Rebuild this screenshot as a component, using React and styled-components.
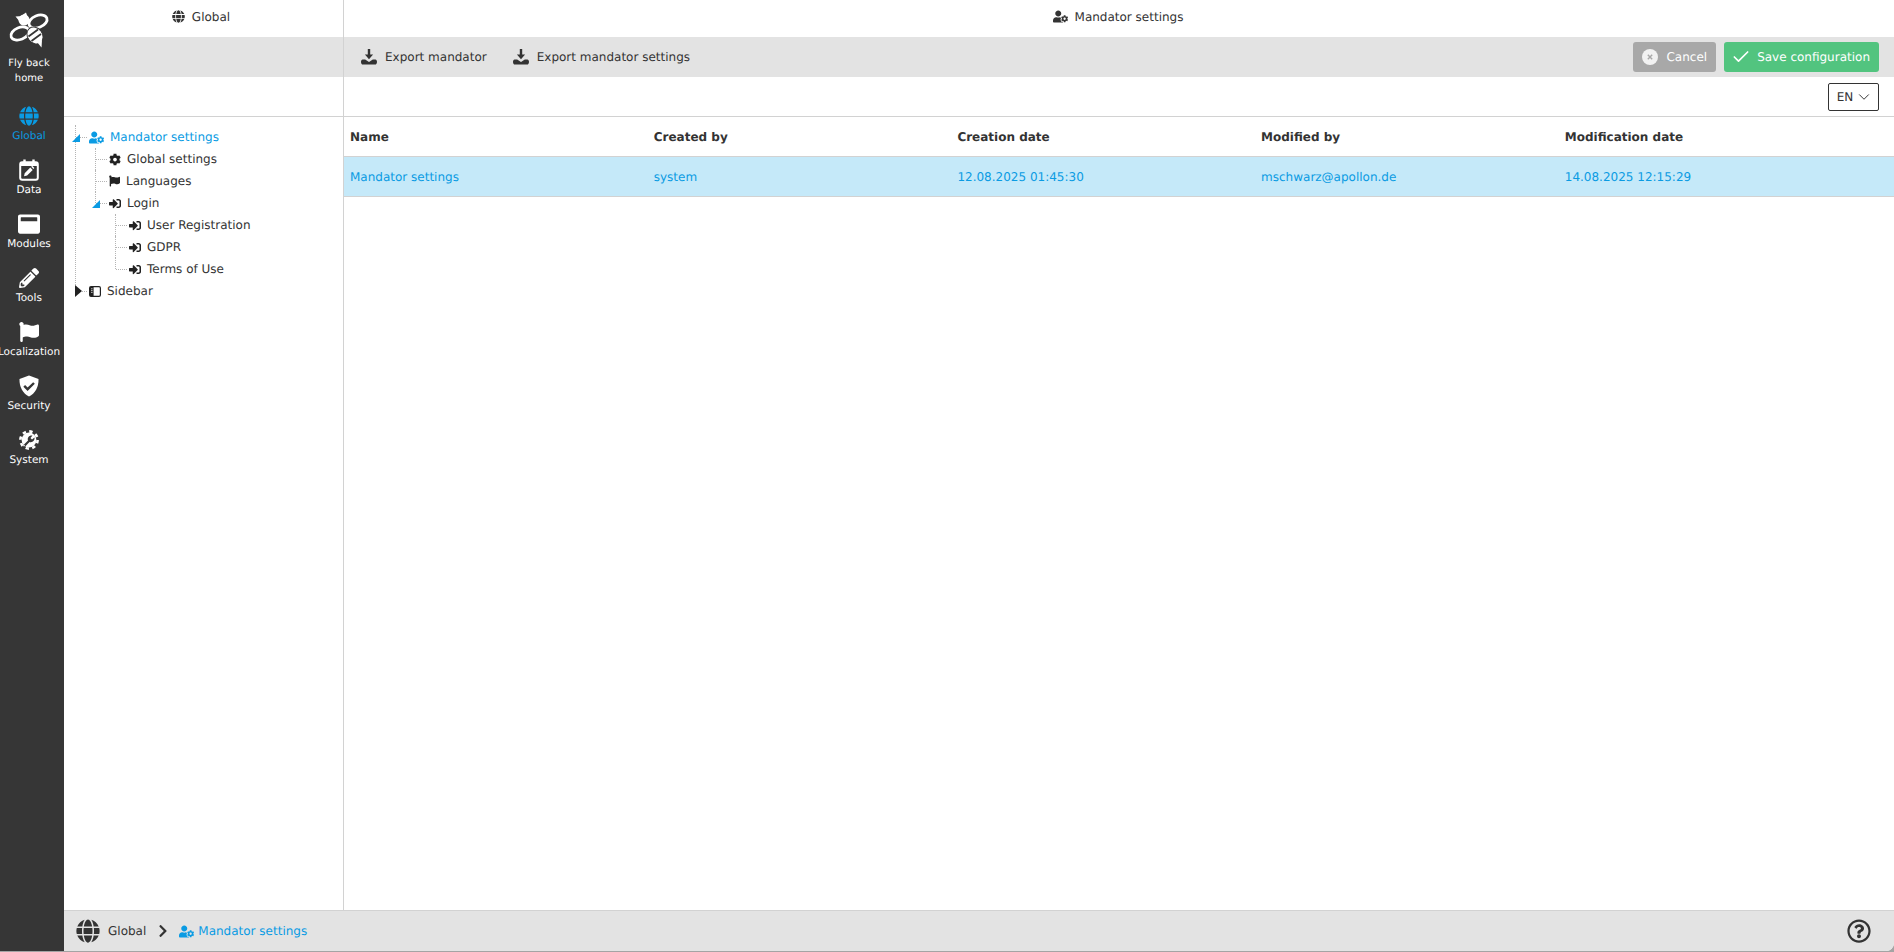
import styled, { createGlobalStyle } from "styled-components";
import {
  FaCog,
  FaFlag,
  FaGlobe,
  FaPencilAlt,
  FaRegQuestionCircle,
  FaSignInAlt,
  FaUserCog,
  FaWindowMaximize,
  FaChevronRight,
} from "react-icons/fa";
import { Check, ChevronDown } from "lucide-react";

const GlobalStyle = createGlobalStyle`
  html, body {
    margin: 0;
    height: 100%;
    background: #fff;
  }
  body {
    font-family: "DejaVu Sans", sans-serif;
    font-size: 12px;
    color: #333;
    overflow: hidden;
    text-rendering: geometricPrecision;
  }
`;

const Shell = styled.div`
  display: flex;
  width: 1894px;
  height: 952px;
  padding-bottom: 1px;
  box-sizing: border-box;
  background: #a4a4a4;
`;

const Sidebar = styled.nav`
  width: 64px;
  flex: none;
  background: #363636;
  overflow: hidden;
  color: #fff;
`;

const Logo = styled.div`
  width: 58px;
  height: 94px;
  display: flex;
  flex-direction: column;
  align-items: center;
  font-size: 10px;
  line-height: 15px;
  text-align: center;
  svg {
    margin-bottom: 6px;
  }
`;

const NavItem = styled.div`
  width: 58px;
  height: 54px;
  display: flex;
  flex-direction: column;
  align-items: center;
  padding-top: 11px;
  box-sizing: border-box;
  font-size: 10.5px;
  line-height: 13px;
  color: ${(p) => (p.$active ? "#0a9be3" : "#fff")};
  white-space: nowrap;
`;

const NavIcon = styled.span`
  height: 22px;
  margin-bottom: 3px;
  display: flex;
  align-items: center;
  justify-content: center;
`;

const Main = styled.div`
  flex: 1;
  min-width: 0;
  display: flex;
  flex-direction: column;
  background: #fff;
  border-bottom-right-radius: 8px;
`;

const Columns = styled.div`
  display: grid;
  grid-template-columns: 280px 1fr;
  flex: none;
  height: ${(p) => p.$h}px;
  background: ${(p) => p.$bg || "#fff"};
`;

const HeaderCell = styled.div`
  display: flex;
  align-items: center;
  justify-content: center;
  gap: 7px;
  border-right: ${(p) => (p.$divider ? "1px solid #d2d2d2" : "none")};
  padding: 0 ${(p) => (p.$divider ? 5 : 2)}px 4px 0;
  svg {
    font-size: ${(p) => (p.$divider ? 13 : 15)}px;
  }
`;

const Toolbar = styled.div`
  display: flex;
  align-items: center;
  padding: 0 15px 0 17px;
`;

const ToolButton = styled.div`
  display: flex;
  align-items: center;
  gap: 8px;
  margin-right: 26px;
`;

const Spacer = styled.div`
  flex: 1;
`;

const ActionButton = styled.div`
  height: 30px;
  display: flex;
  align-items: center;
  gap: 8px;
  padding: 0 9px;
  margin-left: 8px;
  color: #fff;
  border-radius: 3px;
  background: ${(p) => p.$bg};
`;

const SaveCheck = styled(Check)`
  margin: 0 -2px;
`;

const FilterBlank = styled.div`
  border-right: 1px solid #d2d2d2;
  border-bottom: 1px solid #d2d2d2;
`;

const FilterCell = styled.div`
  display: flex;
  align-items: center;
  justify-content: flex-end;
  padding-right: 15px;
  border-bottom: 1px solid #d2d2d2;
`;

const LangSelect = styled.div`
  width: 51px;
  height: 28px;
  box-sizing: border-box;
  border: 1px solid #333;
  border-radius: 2px;
  display: flex;
  align-items: center;
  justify-content: center;
  gap: 2px;
  padding-left: 3px;
`;

const Content = styled.div`
  flex: 1;
  min-height: 0;
  display: grid;
  grid-template-columns: 280px 1fr;
`;

const TreePanel = styled.div`
  padding: 9px 0 0 1px;
  border-right: 1px solid #d2d2d2;
`;

const TreeList = styled.ul`
  list-style: none;
  margin: 0;
  padding: 0 0 0 ${(p) => (p.$nested ? 20 : 0)}px;
`;

const TreeItem = styled.li`
  position: relative;
  &::before {
    content: "";
    position: absolute;
    left: 10px;
    top: ${(p) => (p.$first ? "-1px" : "0")};
    height: ${(p) => (p.$last ? "11px" : "100%")};
    border-left: 1px dotted #b5b5b5;
  }
`;

const TreeRow = styled.div`
  position: relative;
  height: 22px;
  display: flex;
  align-items: center;
  color: ${(p) => (p.$active ? "#0a9be3" : "#333")};
  white-space: nowrap;
  &::before {
    content: "";
    position: absolute;
    left: 11px;
    top: 11px;
    width: 11px;
    border-top: 1px dotted #b5b5b5;
  }
`;

const Toggler = styled.span`
  position: relative;
  width: 20px;
  height: 22px;
  flex: none;
  &::after {
    content: "";
    position: absolute;
    width: 0;
    height: 0;
    ${(p) =>
      p.$state === "open" &&
      `left: 7px; top: 8px; border-left: 8px solid transparent; border-bottom: 8px solid #0a9be3;`}
    ${(p) =>
      p.$state === "closed" &&
      `left: 10px; top: 5px; border-top: 6px solid transparent; border-bottom: 6px solid transparent; border-left: 7px solid #222;`}
  }
`;

const TreeIcon = styled.span`
  position: relative;
  width: ${(p) => p.$w || 12}px;
  margin-left: 4px;
  margin-right: 6px;
  flex: none;
  display: flex;
  align-items: center;
  font-size: ${(p) => p.$size || 13}px;
  color: ${(p) => (p.$active ? "#0a9be3" : "#222")};
`;

const Table = styled.div`
  min-width: 0;
`;

const TableRow = styled.div`
  display: grid;
  grid-template-columns: repeat(4, 303.7px) 1fr;
  height: 39px;
  align-items: center;
  border-bottom: 1px solid #d2d2d2;
  background: ${(p) => (p.$selected ? "#c5e9f9" : "#fff")};
  color: ${(p) => (p.$selected ? "#0a9be3" : "#333")};
  font-weight: ${(p) => (p.$head ? 700 : 400)};
`;

const Cell = styled.div`
  padding-left: 6px;
`;

const Footer = styled.div`
  flex: none;
  height: 40px;
  background: #e3e3e3;
  border-top: 1px solid #d2d2d2;
  border-bottom-right-radius: 8px;
  display: flex;
  align-items: center;
  padding: 0 23px 0 12px;
`;

const Crumb = styled.span`
  display: flex;
  align-items: center;
  color: ${(p) => (p.$active ? "#0a9be3" : "#333")};
  gap: ${(p) => p.$gap}px;
`;

const CrumbArrow = styled.span`
  display: flex;
  margin: 0 9px 0 10px;
  color: #333;
  font-size: 14px;
`;

const HelpIcon = styled.span`
  display: flex;
  margin-left: auto;
  font-size: 24px;
  color: #333;
`;

const Bee = () => (
  <svg width="58" height="50" viewBox="0 0 58 50" fill="none">
    <circle cx="24" cy="20" r="5.5" fill="#fff" />
    <path d="M21 16 L26 12.5 L28 18 Z M20 22 L15.5 16.5 L23 16 Z" fill="#fff" />
    <ellipse cx="38" cy="21.5" rx="9.5" ry="6" transform="rotate(-22 38 21.5)" stroke="#fff" strokeWidth="2.8" />
    <ellipse cx="20" cy="33.5" rx="9.5" ry="6" transform="rotate(-22 20 33.5)" stroke="#fff" strokeWidth="2.8" />
    <ellipse cx="35" cy="35.5" rx="9" ry="7.5" transform="rotate(52 35 35.5)" fill="#fff" stroke="#363636" strokeWidth="1" />
    <path d="M28.5 36.5 L38 29.5 M31.5 41 L41 34" stroke="#363636" strokeWidth="1.8" />
    <path d="M37 42 L41.5 47.5 L42 40 Z" fill="#fff" />
  </svg>
);

const CalendarPen = () => (
  <svg width="20" height="22" viewBox="0 0 20 22" fill="none">
    <rect x="1.2" y="3.2" width="17.6" height="17.6" rx="2" stroke="#fff" strokeWidth="2" />
    <path d="M1 4h18v3H1z" fill="#fff" />
    <path d="M5.5 0.5v4M14.5 0.5v4" stroke="#fff" strokeWidth="2.4" />
    <path d="M5 17.2l.7-3 5.6-5.6 2.4 2.4-5.6 5.6z M12.2 7.8l1-1 2.2 2.2-1 1z" fill="#fff" />
  </svg>
);

const ShieldCheck = () => (
  <svg width="20" height="22" viewBox="0 0 20 22">
    <path d="M10 0.5 L19.5 4 C19.8 12 16 18.5 10 21.5 C4 18.5 0.2 12 0.5 4 Z" fill="#fff" />
    <path d="M5.2 10.8 L8.6 14.2 L15 8" stroke="#363636" strokeWidth="2.4" fill="none" />
  </svg>
);

const GearWrench = () => (
  <svg width="20" height="20" viewBox="0 0 20 20">
    <circle cx="10" cy="10" r="7.4" fill="#fff" />
    <circle cx="10" cy="10" r="8.6" fill="none" stroke="#fff" strokeWidth="2.6" strokeDasharray="3.4 3.35" />
    <path d="M3 16.5 L9 10.5 C8 7.5 10.5 5 13.5 5.6 L11.5 8 L13 9.6 L15.5 7.6 C16 10.5 13.5 13 10.5 12 L5 17.8 Z" fill="#363636" />
    <circle cx="5" cy="15.6" r=".8" fill="#fff" />
  </svg>
);

const ExportIcon = () => (
  <svg width="16" height="16" viewBox="0 0 16 16" fill="#333">
    <path d="M6.8 0h2.4v5.5h2.9L8 10.2 3.9 5.5h2.9z" />
    <path d="M1.6 10.4h2.6L8 13l3.8-2.6h2.6c.9 0 1.6 1.1 1.6 2.3 0 1.6-.8 2.9-1.8 2.9H1.8C.8 15.6 0 14.3 0 12.7c0-1.2.7-2.3 1.6-2.3z" />
  </svg>
);

const CancelIcon = () => (
  <svg width="16" height="16" viewBox="0 0 16 16">
    <circle cx="8" cy="8" r="8" fill="#f2f2f2" />
    <path d="M5.8 5.8l4.4 4.4M10.2 5.8l-4.4 4.4" stroke="#a8a8a8" strokeWidth="1.4" />
  </svg>
);

const SidebarIcon = () => (
  <svg width="12" height="11" viewBox="0 0 12 11" fill="none">
    <rect x=".6" y=".6" width="10.8" height="9.8" rx="1.4" stroke="#222" strokeWidth="1.2" />
    <path d="M1 1h3.6v9H1z" fill="#222" />
    <path d="M2 2.8h1.6M2 4.6h1.6M2 6.4h1.6" stroke="#fff" strokeWidth=".7" />
  </svg>
);

const navItems = [
  { label: "Global", icon: <FaGlobe size={20} />, active: true },
  { label: "Data", icon: <CalendarPen /> },
  { label: "Modules", icon: <FaWindowMaximize size={22} /> },
  { label: "Tools", icon: <FaPencilAlt size={20} /> },
  { label: "Localization", icon: <FaFlag size={20} /> },
  { label: "Security", icon: <ShieldCheck /> },
  { label: "System", icon: <GearWrench /> },
];

const columns = ["Name", "Created by", "Creation date", "Modified by", "Modification date"];
const rowData = ["Mandator settings", "system", "12.08.2025 01:45:30", "mschwarz@apollon.de", "14.08.2025 12:15:29"];

export default function App() {
  return (
    <Shell>
      <GlobalStyle />
      <Sidebar>
        <Logo>
          <Bee />
          Fly back
          <br />
          home
        </Logo>
        {navItems.map((item) => (
          <NavItem key={item.label} $active={item.active}>
            <NavIcon>{item.icon}</NavIcon>
            {item.label}
          </NavItem>
        ))}
      </Sidebar>
      <Main>
        <Columns $h={37}>
          <HeaderCell $divider>
            <FaGlobe />
            Global
          </HeaderCell>
          <HeaderCell>
            <FaUserCog />
            Mandator settings
          </HeaderCell>
        </Columns>
        <Columns $h={40} $bg="#e3e3e3">
          <HeaderCell $divider />
          <Toolbar>
            <ToolButton>
              <ExportIcon />
              Export mandator
            </ToolButton>
            <ToolButton>
              <ExportIcon />
              Export mandator settings
            </ToolButton>
            <Spacer />
            <ActionButton $bg="#a8a8a8">
              <CancelIcon />
              Cancel
            </ActionButton>
            <ActionButton $bg="#52c47f">
              <SaveCheck size={20} />
              Save configuration
            </ActionButton>
          </Toolbar>
        </Columns>
        <Columns $h={40}>
          <FilterBlank />
          <FilterCell>
            <LangSelect>
              EN
              <ChevronDown size={18} strokeWidth={1.3} />
            </LangSelect>
          </FilterCell>
        </Columns>
        <Content>
          <TreePanel>
            <TreeList>
              <TreeItem $first>
                <TreeRow $active>
                  <Toggler $state="open" />
                  <TreeIcon $active $w={15} $size={15}>
                    <FaUserCog />
                  </TreeIcon>
                  Mandator settings
                </TreeRow>
                <TreeList $nested>
                  <TreeItem>
                    <TreeRow>
                      <Toggler />
                      <TreeIcon>
                        <FaCog />
                      </TreeIcon>
                      Global settings
                    </TreeRow>
                  </TreeItem>
                  <TreeItem>
                    <TreeRow>
                      <Toggler />
                      <TreeIcon $w={11} $size={12}>
                        <FaFlag />
                      </TreeIcon>
                      Languages
                    </TreeRow>
                  </TreeItem>
                  <TreeItem $last>
                    <TreeRow>
                      <Toggler $state="open" />
                      <TreeIcon>
                        <FaSignInAlt />
                      </TreeIcon>
                      Login
                    </TreeRow>
                    <TreeList $nested>
                      {["User Registration", "GDPR", "Terms of Use"].map((name, i) => (
                        <TreeItem key={name} $last={i === 2}>
                          <TreeRow>
                            <Toggler />
                            <TreeIcon>
                              <FaSignInAlt />
                            </TreeIcon>
                            {name}
                          </TreeRow>
                        </TreeItem>
                      ))}
                    </TreeList>
                  </TreeItem>
                </TreeList>
              </TreeItem>
              <TreeItem $last>
                <TreeRow>
                  <Toggler $state="closed" />
                  <TreeIcon>
                    <SidebarIcon />
                  </TreeIcon>
                  Sidebar
                </TreeRow>
              </TreeItem>
            </TreeList>
          </TreePanel>
          <Table>
            <TableRow $head>
              {columns.map((c) => (
                <Cell key={c}>{c}</Cell>
              ))}
            </TableRow>
            <TableRow $selected>
              {rowData.map((c) => (
                <Cell key={c}>{c}</Cell>
              ))}
            </TableRow>
          </Table>
        </Content>
        <Footer>
          <Crumb $gap={8}>
            <FaGlobe size={24} />
            Global
          </Crumb>
          <CrumbArrow>
            <FaChevronRight />
          </CrumbArrow>
          <Crumb $active $gap={4}>
            <FaUserCog size={15} />
            Mandator settings
          </Crumb>
          <HelpIcon>
            <FaRegQuestionCircle />
          </HelpIcon>
        </Footer>
      </Main>
    </Shell>
  );
}
